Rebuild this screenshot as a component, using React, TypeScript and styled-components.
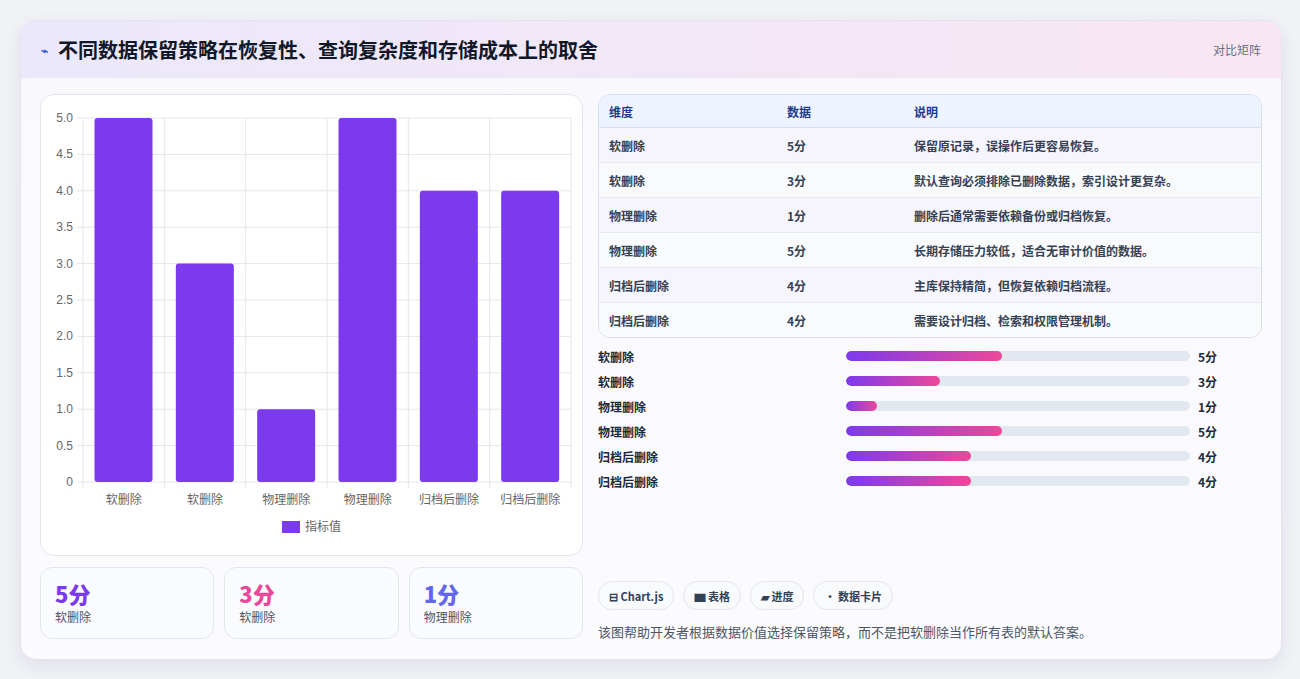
import React from "react";
import styled, { createGlobalStyle } from "styled-components";

const Global = createGlobalStyle`
  body { margin: 0; background: #f1f2f6; font-family: "Noto Sans CJK SC", "Noto Sans", sans-serif; }
`;

const rows = [
  { name: "软删除", score: 5, note: "保留原记录，误操作后更容易恢复。" },
  { name: "软删除", score: 3, note: "默认查询必须排除已删除数据，索引设计更复杂。" },
  { name: "物理删除", score: 1, note: "删除后通常需要依赖备份或归档恢复。" },
  { name: "物理删除", score: 5, note: "长期存储压力较低，适合无审计价值的数据。" },
  { name: "归档后删除", score: 4, note: "主库保持精简，但恢复依赖归档流程。" },
  { name: "归档后删除", score: 4, note: "需要设计归档、检索和权限管理机制。" },
];

const Chart = () => {
  const left = 42, top = 23, w = 488, h = 364;
  const cw = w / 6;
  const ticks = [0, 0.5, 1, 1.5, 2, 2.5, 3, 3.5, 4, 4.5, 5];
  return (
    <svg width="540" height="460" style={{ display: "block" }}>
      {ticks.map((t) => {
        const y = top + h - (t / 5) * h;
        return (
          <g key={t}>
            <line x1={left - 6} x2={left + w} y1={y} y2={y} stroke="#e4e6ec" />
            <text x={left - 10} y={y + 4} textAnchor="end" fontSize="12" fill="#666" fontFamily="Liberation Sans, sans-serif">
              {t === 0 ? "0" : t.toFixed(1)}
            </text>
          </g>
        );
      })}
      {Array.from({ length: 7 }).map((_, i) => (
        <line key={i} x1={left + i * cw} x2={left + i * cw} y1={top} y2={top + h + 6} stroke="#e4e6ec" />
      ))}
      {rows.map((r, i) => {
        const bh = (r.score / 5) * h;
        return (
          <g key={i}>
            <rect x={left + i * cw + 11.5} y={top + h - bh} width={58} height={bh} rx="3" fill="#7c3aed" />
            <text x={left + i * cw + cw / 2} y={top + h + 22} textAnchor="middle" fontSize="12" fill="#666">
              {r.name}
            </text>
          </g>
        );
      })}
      <rect x="241" y="426" width="18" height="12" fill="#7c3aed" />
      <text x="264" y="436" fontSize="12" fill="#666">指标值</text>
    </svg>
  );
};

export default function App() {
  return (
    <Page>
      <Global />
      <Card>
        <Header>
          <Title><Bolt>⌁</Bolt>不同数据保留策略在恢复性、查询复杂度和存储成本上的取舍</Title>
          <Tag>对比矩阵</Tag>
        </Header>
        <Body>
          <LeftCol>
            <ChartBox><Chart /></ChartBox>
            <Stats>
              <Stat><StatNum $c="#7c3aed">5分</StatNum><StatLabel>软删除</StatLabel></Stat>
              <Stat><StatNum $c="#ec4899">3分</StatNum><StatLabel>软删除</StatLabel></Stat>
              <Stat><StatNum $c="#6366f1">1分</StatNum><StatLabel>物理删除</StatLabel></Stat>
            </Stats>
          </LeftCol>
          <RightCol>
            <Table>
              <thead>
                <tr><Th style={{ width: 158 }}>维度</Th><Th style={{ width: 107 }}>数据</Th><Th>说明</Th></tr>
              </thead>
              <tbody>
                {rows.map((r, i) => (
                  <Tr key={i} $alt={i % 2 === 1}><Td>{r.name}</Td><Td>{r.score}分</Td><Td>{r.note}</Td></Tr>
                ))}
              </tbody>
            </Table>
            <Bars>
              {rows.map((r, i) => (
                <BarRow key={i}>
                  <BarLabel>{r.name}</BarLabel>
                  <Track><Fill style={{ width: `${(r.score / 11) * 100}%` }} /></Track>
                  <BarVal>{r.score}分</BarVal>
                </BarRow>
              ))}
            </Bars>
            <Spacer />
            <Chips>
              <Chip>⊟ Chart.js</Chip>
              <Chip>▆ 表格</Chip>
              <Chip>▰ 进度</Chip>
              <Chip>• 数据卡片</Chip>
            </Chips>
            <Foot>该图帮助开发者根据数据价值选择保留策略，而不是把软删除当作所有表的默认答案。</Foot>
          </RightCol>
        </Body>
      </Card>
    </Page>
  );
}

const Page = styled.div`
  padding: 20px;
  height: 679px;
  box-sizing: border-box;
`;
const Card = styled.div`
  width: 1260px;
  height: 638px;
  background: linear-gradient(180deg, #f8f8fe, #fbfbfe);
  border: 1px solid #e3e4ef;
  border-radius: 16px;
  box-shadow: 0 6px 18px rgba(30, 30, 80, 0.08);
  overflow: hidden;
  display: flex;
  flex-direction: column;
`;
const Header = styled.div`
  height: 56px;
  display: flex;
  align-items: center;
  justify-content: space-between;
  padding: 0 20px;
  background: linear-gradient(90deg, #ebe8fb, #f8e6f2);
  border-bottom: 1px solid #ebe6f2;
`;
const Title = styled.div`
  font-size: 20px;
  font-weight: 700;
  color: #111827;
  display: flex;
  align-items: center;
  gap: 10px;
`;
const Bolt = styled.span`
  color: #3b5bdb;
  font-size: 12px;
`;
const Tag = styled.span`
  font-size: 12px;
  color: #6b6f85;
`;
const Body = styled.div`
  flex: 1;
  display: flex;
  gap: 15px;
  padding: 16px 19px 18px 19px;
`;
const LeftCol = styled.div`
  width: 543px;
  display: flex;
  flex-direction: column;
  gap: 11px;
`;
const ChartBox = styled.div`
  height: 460px;
  background: #fff;
  border: 1px solid #e3e6ef;
  border-radius: 14px;
`;
const Stats = styled.div`
  display: flex;
  gap: 10px;
`;
const Stat = styled.div`
  flex: 1;
  height: 72px;
  box-sizing: border-box;
  padding: 10px 14px;
  background: #fafbff;
  border: 1px solid #dfe6f2;
  border-radius: 12px;
`;
const StatNum = styled.div<{ $c: string }>`
  font-size: 22px;
  font-weight: 800;
  color: ${(p) => p.$c};
  line-height: 30px;
`;
const StatLabel = styled.div`
  font-size: 12px;
  color: #4b5563;
`;
const RightCol = styled.div`
  flex: 1;
  display: flex;
  flex-direction: column;
`;
const Table = styled.table`
  width: 100%;
  border-collapse: separate;
  border-spacing: 0;
  border: 1px solid #d8dff0;
  border-radius: 12px;
  overflow: hidden;
  font-size: 12px;
`;
const Th = styled.th`
  text-align: left;
  height: 32px;
  padding: 0 10px;
  background: #eef4ff;
  color: #1e3a8a;
  font-weight: 700;
  border-bottom: 1px solid #d8dff0;
`;
const Tr = styled.tr<{ $alt: boolean }>`
  background: ${(p) => (p.$alt ? "#f8fafc" : "#f6f4fd")};
`;
const Td = styled.td`
  height: 34px;
  padding: 0 10px;
  color: #374151;
  font-weight: 600;
  border-top: 1px solid #e6e9f2;
  tr:first-child > & { border-top: none; }
`;
const Bars = styled.div`
  margin-top: 9px;
  display: flex;
  flex-direction: column;
  gap: 7px;
`;
const BarRow = styled.div`
  display: flex;
  align-items: center;
  height: 18px;
  font-size: 12px;
  font-weight: 600;
  color: #1f2937;
`;
const BarLabel = styled.span`
  width: 248px;
`;
const Track = styled.div`
  width: 344px;
  height: 10px;
  background: #e2e8f0;
  border-radius: 5px;
  overflow: hidden;
`;
const Fill = styled.div`
  height: 100%;
  border-radius: 5px;
  background: linear-gradient(90deg, #7c3aed, #ec4899);
`;
const BarVal = styled.span`
  margin-left: 8px;
`;
const Spacer = styled.div`
  flex: 1;
`;
const Chips = styled.div`
  display: flex;
  gap: 9px;
`;
const Chip = styled.span`
  height: 27px;
  padding: 0 10px;
  display: flex;
  align-items: center;
  font-size: 11px;
  font-weight: 700;
  color: #334155;
  background: #f8fafc;
  border: 1px solid #e2e6ee;
  border-radius: 14px;
`;
const Foot = styled.div`
  margin-top: 12px;
  font-size: 13px;
  color: #4b5563;
`;
